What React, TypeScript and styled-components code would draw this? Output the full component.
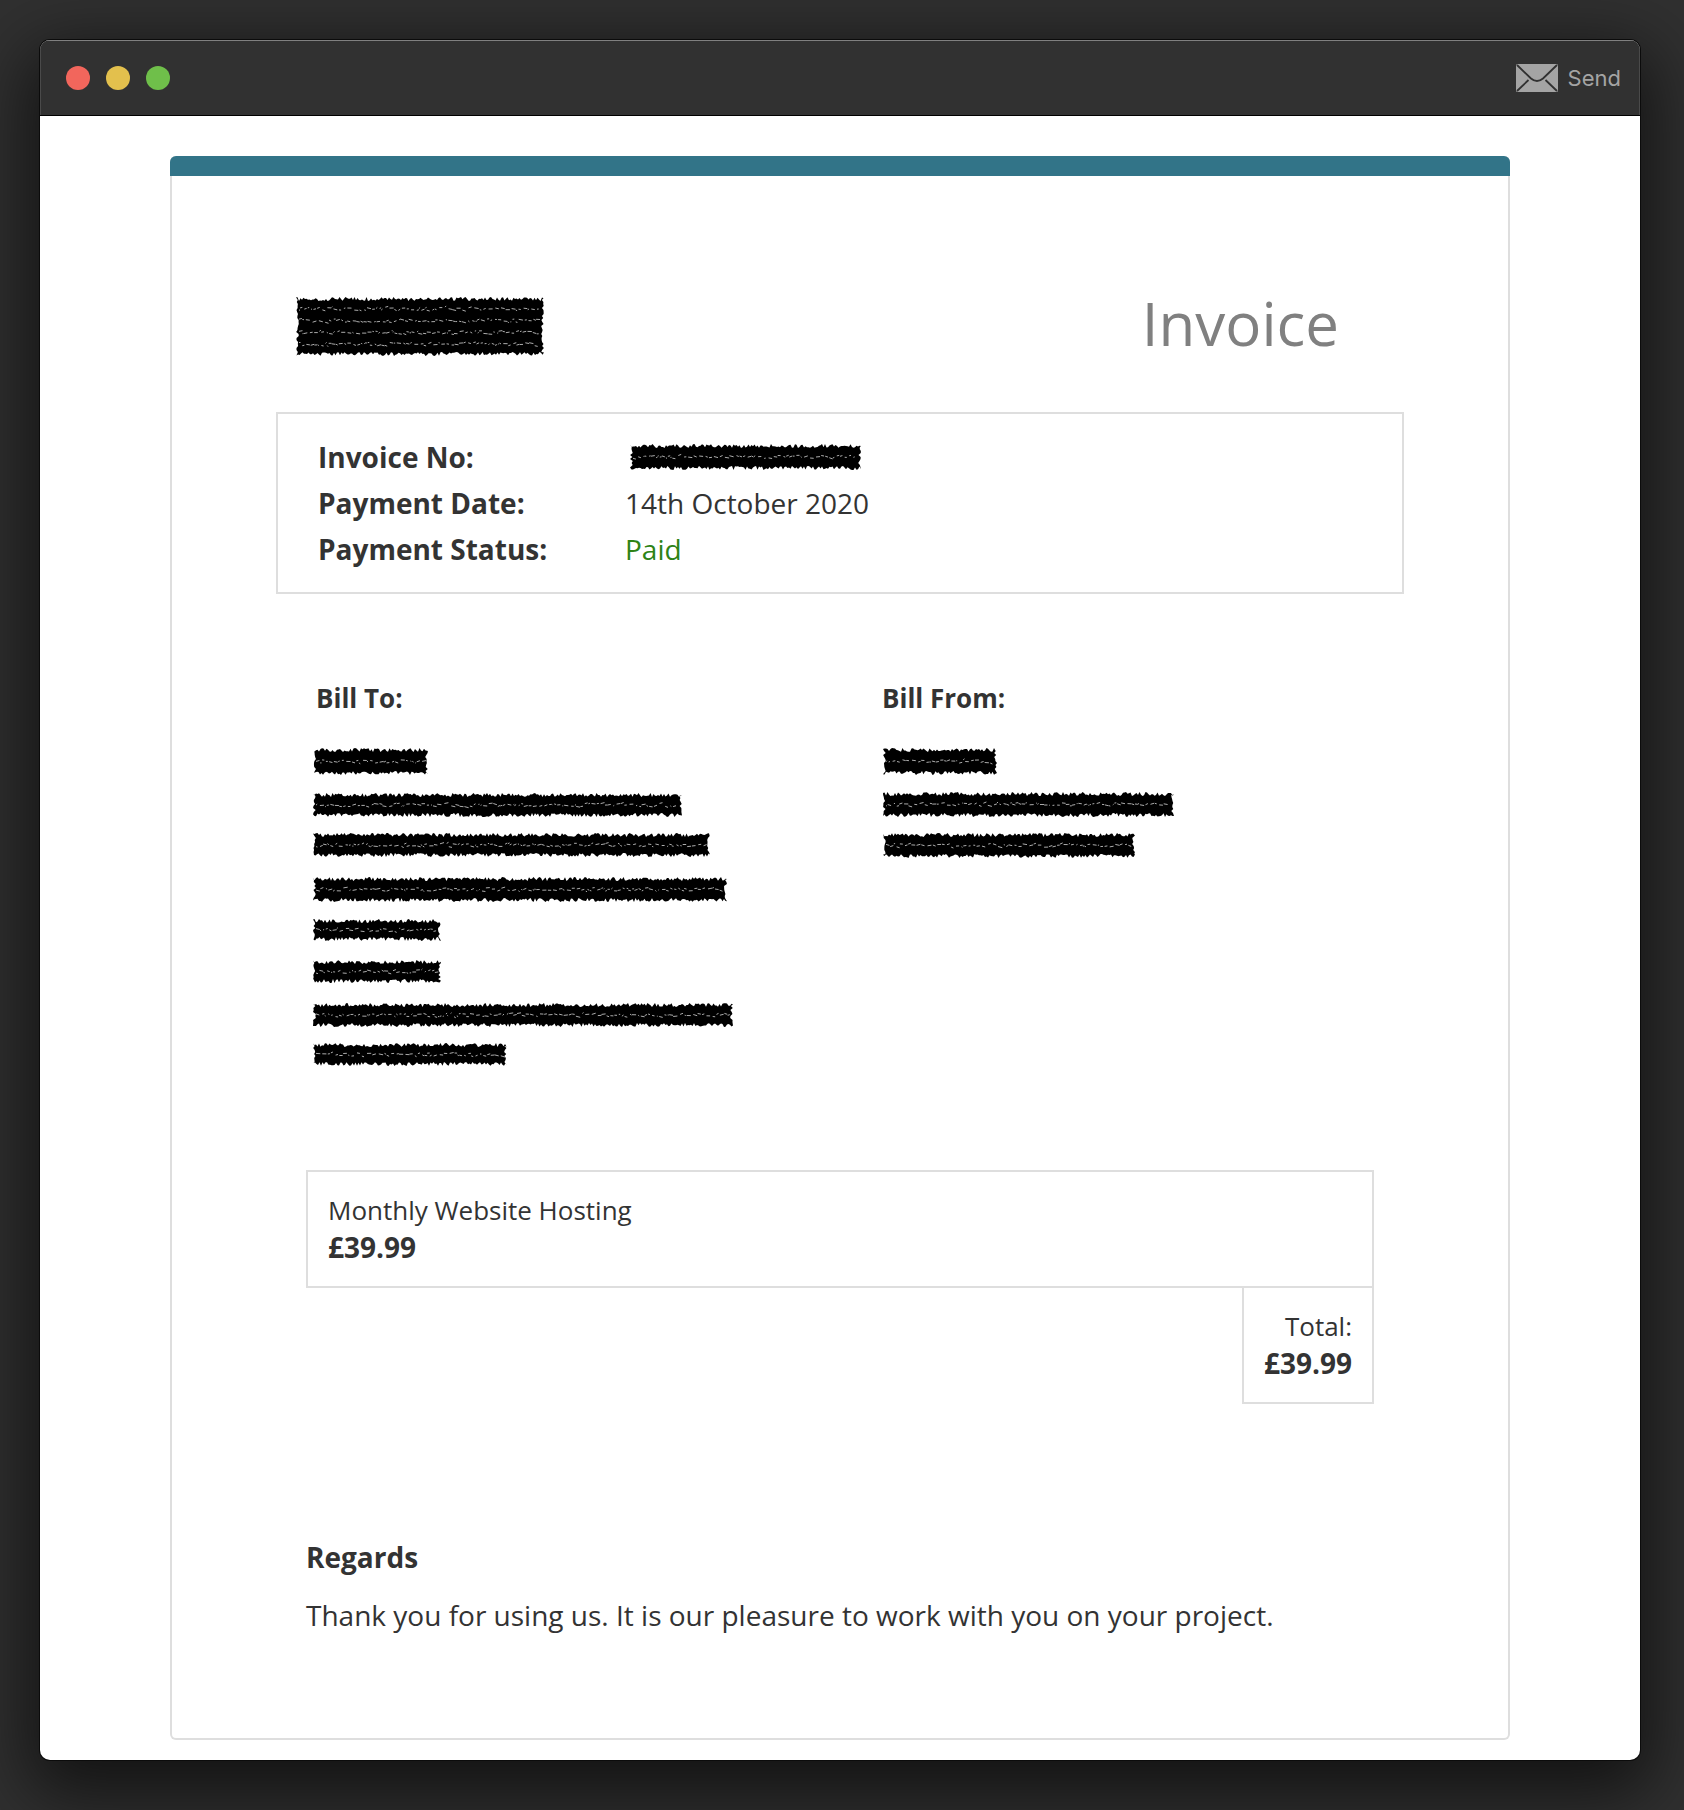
import React from "react";
import styled, { createGlobalStyle } from "styled-components";

const Global = createGlobalStyle`
  html, body { margin: 0; padding: 0; background: #2f2f2f; }
  body { font-family: "Open Sans", "Liberation Sans", sans-serif; color: #333; }
`;

const Page = styled.div`
  width: 1684px;
  height: 1810px;
  box-sizing: border-box;
  padding: 40px 44px 50px 40px;
  background: #303030;
  overflow: hidden;
`;

const Window = styled.div`
  height: 1720px;
  display: flex;
  flex-direction: column;
  border-radius: 10px;
  background: #fff;
  overflow: hidden;
  box-shadow: 0 0 0 1px #0b0b0b, 0 22px 70px 12px rgba(0, 0, 0, 0.62);
`;

const TitleBar = styled.div`
  flex: none;
  height: 76px;
  box-sizing: border-box;
  display: flex;
  align-items: center;
  padding: 0 19px 0 26px;
  background: #313131;
  border-bottom: 1px solid #000;
  box-shadow: inset 0 1px 0 #808080, inset 1px 0 0 #4a4a4a, inset -1px 0 0 #4a4a4a;
`;

const Lights = styled.div`
  display: flex;
  gap: 16px;
`;

const Light = styled.span<{ $color: string }>`
  width: 24px;
  height: 24px;
  border-radius: 50%;
  background: ${(p) => p.$color};
`;

const SendButton = styled.div`
  margin-left: auto;
  display: flex;
  align-items: center;
  gap: 10px;
  font-family: Inter, "Liberation Sans", sans-serif;
  font-size: 22px;
  color: #a4a4a4;
`;

const Body = styled.div`
  flex: 1;
  min-height: 0;
  display: flex;
  padding: 40px 130px 20px;
`;

const Card = styled.div`
  flex: 1;
  display: flex;
  flex-direction: column;
  box-sizing: border-box;
  border: 2px solid #dedede;
  border-top: 0;
  border-radius: 6px;
`;

const TopStripe = styled.div`
  height: 20px;
  margin: 0 -2px;
  background: #327488;
  border-radius: 6px 6px 0 0;
`;

const Header = styled.div`
  display: flex;
  align-items: center;
  justify-content: space-between;
  height: 236px;
  box-sizing: border-box;
  padding: 60px 169px 0 124px;
`;

const InvoiceTitle = styled.h1`
  margin: -2px 0 0;
  font-size: 60px;
  font-weight: 400;
  color: #808080;
  line-height: 1;
`;

const MetaBox = styled.div`
  margin: 0 104px;
  box-sizing: border-box;
  height: 182px;
  padding: 20px 40px;
  border: 2px solid #dedede;
  display: grid;
  grid-template-columns: 307px 1fr;
  grid-auto-rows: 46px;
  align-items: center;
  font-size: 28px;
`;

const MetaLabel = styled.span`
  font-weight: 700;
`;

const MetaValue = styled.span<{ $paid?: boolean }>`
  color: ${(p) => (p.$paid ? "#2e8316" : "#333")};
`;

const BillGrid = styled.div`
  display: grid;
  grid-template-columns: 566px 1fr;
  padding: 0 0 0 144px;
  margin-top: 87px;
  height: 489px;
`;

const BillColumn = styled.div`
  display: flex;
  flex-direction: column;
`;

const BillTitle = styled.div`
  font-size: 26px;
  font-weight: 700;
  line-height: 34px;
  margin-bottom: 33px;
`;

const Redaction = styled.svg<{ $gap?: number; $shift?: number }>`
  display: block;
  flex: none;
  margin-top: ${(p) => p.$gap ?? 0}px;
  margin-left: ${(p) => p.$shift ?? 0}px;
  filter: blur(0.35px);
`;

const LineItem = styled.div`
  margin: 0 134px;
  box-sizing: border-box;
  height: 118px;
  padding: 20px 20px;
  border: 2px solid #dedede;
  font-size: 26px;
  line-height: 37px;
`;

const Price = styled.div`
  font-size: 28px;
  font-weight: 700;
`;

const TotalRow = styled.div`
  display: flex;
  justify-content: flex-end;
  margin: 0 134px;
`;

const TotalBox = styled.div`
  box-sizing: border-box;
  width: 132px;
  height: 118px;
  margin-top: -2px;
  padding: 20px;
  border: 2px solid #dedede;
  text-align: right;
  font-size: 26px;
  line-height: 37px;
`;

const Regards = styled.div`
  margin: 134px 134px 0;
`;

const RegardsTitle = styled.div`
  font-size: 28px;
  font-weight: 700;
  line-height: 38px;
`;

const RegardsText = styled.p`
  margin: 20px 0 0;
  font-size: 28px;
  line-height: 38px;
`;

function rng(seed: number) {
  let s = seed;
  return () => {
    s = (s * 16807) % 2147483647;
    return (s - 1) / 2147483646;
  };
}

type ScribbleProps = { w: number; h: number; lines?: number; gap?: number; shift?: number; seed?: number };

function Scribble({ w, h, lines = 1, gap, shift, seed = 7 }: ScribbleProps) {
  const r = rng(seed * 991 + w * 13 + h);
  const top: string[] = [];
  const bottom: string[] = [];
  const left: string[] = [];
  const right: string[] = [];
  for (let x = 0; x <= w; x += 1.5) {
    top.push(`${x},${(r() * 4).toFixed(1)}`);
    bottom.push(`${w - x},${(h - r() * 4).toFixed(1)}`);
  }
  for (let y = 3; y < h - 3; y += 2) {
    right.push(`${w - r() * 3},${y}`);
    left.unshift(`${r() * 3},${y}`);
  }
  let specks = "";
  for (let l = 1; l <= lines; l++) {
    const y = (h * l) / (lines + 1);
    let x = 3;
    while (x < w - 5) {
      const len = 0.8 + r() * 3.5;
      const jy = (r() - 0.5) * 3.4;
      specks += `M${x.toFixed(1)} ${(y + jy).toFixed(1)}l${len.toFixed(1)} ${((r() - 0.5) * 2.4).toFixed(1)}`;
      x += len + r() * 3;
    }
  }
  return (
    <Redaction $gap={gap} $shift={shift} width={w} height={h} viewBox={`0 0 ${w} ${h}`}>
      <polygon points={[...top, ...right, ...bottom, ...left].join(" ")} fill="#000" />
      <path d={specks} stroke="#fff" strokeWidth={0.8} strokeOpacity={0.85} fill="none" />
    </Redaction>
  );
}

const billTo = [
  { w: 115, h: 27, gap: 0 },
  { w: 369, h: 24, gap: 18 },
  { w: 397, h: 24, gap: 16 },
  { w: 414, h: 25, gap: 20 },
  { w: 128, h: 22, gap: 17 },
  { w: 128, h: 23, gap: 19 },
  { w: 420, h: 24, gap: 20 },
  { w: 194, h: 23, gap: 16 },
];

const billFrom = [
  { w: 114, h: 27, gap: 0 },
  { w: 291, h: 25, gap: 17 },
  { w: 252, h: 25, gap: 16 },
];

export default function App() {
  return (
    <Page>
      <Global />
      <Window>
        <TitleBar>
          <Lights>
            <Light $color="#f2665c" />
            <Light $color="#e3c04d" />
            <Light $color="#6fbf4a" />
          </Lights>
          <SendButton>
            <svg width="42" height="28" viewBox="0 0 42 28">
              <rect width="42" height="28" rx="1.5" fill="#a4a4a4" />
              <path
                d="M1 1 L15 14.5 Q21 19.5 27 14.5 L41 1 M1 27 L12.5 16 M41 27 L29.5 16"
                fill="none"
                stroke="#313131"
                strokeWidth="1.8"
              />
            </svg>
            Send
          </SendButton>
        </TitleBar>
        <Body>
          <Card>
            <TopStripe />
            <Header>
              <Scribble w={248} h={59} lines={4} gap={4} seed={3} />
              <InvoiceTitle>Invoice</InvoiceTitle>
            </Header>
            <MetaBox>
              <MetaLabel>Invoice No:</MetaLabel>
              <Scribble w={231} h={26} shift={5} seed={5} />
              <MetaLabel>Payment Date:</MetaLabel>
              <MetaValue>14th October 2020</MetaValue>
              <MetaLabel>Payment Status:</MetaLabel>
              <MetaValue $paid>Paid</MetaValue>
            </MetaBox>
            <BillGrid>
              <BillColumn>
                <BillTitle>Bill To:</BillTitle>
                {billTo.map((l, i) => (
                  <Scribble key={i} w={l.w} h={l.h} gap={l.gap} shift={-3} seed={i + 11} />
                ))}
              </BillColumn>
              <BillColumn>
                <BillTitle>Bill From:</BillTitle>
                {billFrom.map((l, i) => (
                  <Scribble key={i} w={l.w} h={l.h} gap={l.gap} shift={1} seed={i + 31} />
                ))}
              </BillColumn>
            </BillGrid>
            <LineItem>
              Monthly Website Hosting
              <Price>£39.99</Price>
            </LineItem>
            <TotalRow>
              <TotalBox>
                Total:
                <Price>£39.99</Price>
              </TotalBox>
            </TotalRow>
            <Regards>
              <RegardsTitle>Regards</RegardsTitle>
              <RegardsText>Thank you for using us. It is our pleasure to work with you on your project.</RegardsText>
            </Regards>
          </Card>
        </Body>
      </Window>
    </Page>
  );
}
